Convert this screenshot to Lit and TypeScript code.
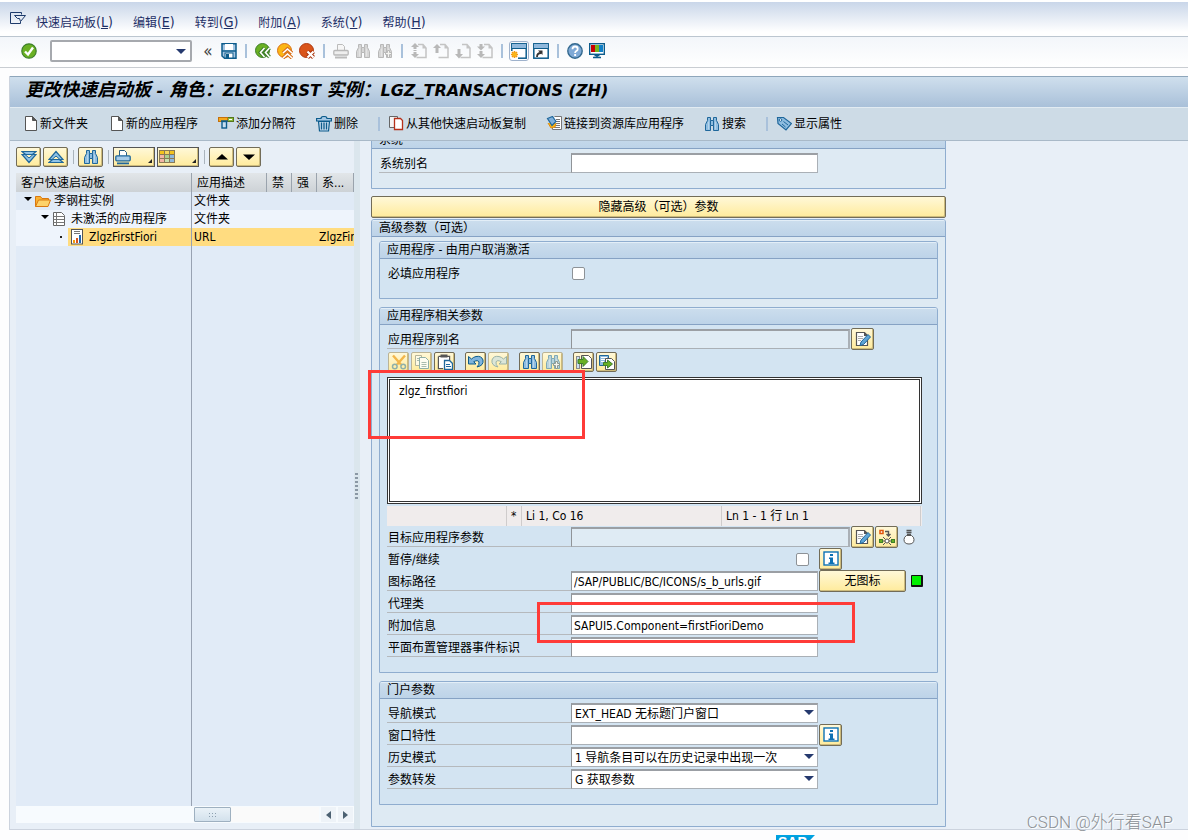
import { LitElement, html, css, svg, nothing } from "lit";
import { customElement, property } from "lit/decorators.js";
import { classMap } from "lit/directives/class-map.js";

const binoculars = (fill: string, line: string) => svg`
  <path d="M3.5 1.5h3v3h3v-3h3v3l2 4v6h-5v-5h-3v5h-5v-6l2-4z" fill=${fill} stroke=${line} />
  <path d="M4.5 5.5v8M11.5 5.5v8" stroke="#fff" stroke-opacity=".35" fill="none" />
  <path d="M6.5 4.5v5M9.5 4.5v5" stroke=${line} fill="none" />`;

const page = (arrow: unknown) => svg`
  <path d="M7 1.5h5l3 3.500v9.500H5.500" fill="none" stroke="#c4c4c4" stroke-width="1.500" />
  <path d="M11.500 1.500v4h4z" fill="#c4c4c4" />${arrow}`;

const plusBadge = (line: string) => svg`
  <path d="M10.500 7.500h2v2h2v2h-2v3h-2v-3h-2v-2h2z" fill="#f4f4f0" stroke=${line} />`;

const icons: Record<string, unknown> = {
  exit: svg`<path d="M11.500 4.500V2.500H.5v11h10v-2M4.500 5.500h11l-5 6-1-3H7.500l-3-3z" fill="none" stroke="#1d3a6b" />`,
  ok: svg`<circle cx="8" cy="8" r="7.200" fill="#6ab023" stroke="#3d7f2a" stroke-width="1.200" />
    <path d="M4 8.500l3 3 5-7" fill="none" stroke="#fff" stroke-width="2.400" />`,
  save: svg`<path d="M1 .8h14v14.400H3.500L1 13z" fill="#a5c5e2" stroke="#0d5c8c" stroke-width="1.500" />
    <rect x="4" y="1" width="8" height="6" fill="#fff" /><path d="M1 8h14" stroke="#0d5c8c" stroke-width="1.500" />
    <rect x="4" y="10" width="8" height="5" fill="#fff" stroke="#0d5c8c" /><rect x="5" y="11" width="3" height="4" fill="#0d5c8c" />`,
  back: svg`<circle cx="7.500" cy="7.500" r="7" fill="#6ab023" stroke="#3d7f2a" />
    <path d="M9.500 5L5.500 9.500l4 4.500M14.500 5l-4 4.500 4 4.500" fill="none" stroke="#3d7f2a" stroke-width="3.600" />
    <path d="M9.500 5L5.500 9.500l4 4.500M14.500 5l-4 4.500 4 4.500" fill="none" stroke="#fff" stroke-width="1.600" />`,
  up: svg`<circle cx="7.500" cy="7.500" r="7" fill="#fbb615" stroke="#d9701a" />
    <path d="M6 10l4.500-4 4.500 4M6 15l4.500-4 4.500 4" fill="none" stroke="#d9701a" stroke-width="3.600" />
    <path d="M6 10l4.500-4 4.500 4M6 15l4.500-4 4.500 4" fill="none" stroke="#fff" stroke-width="1.600" />`,
  cancel: svg`<circle cx="7.500" cy="7.500" r="7" fill="#d9541a" stroke="#b03a10" />
    <path d="M8.500 8.500l6 6M14.500 8.500l-6 6" stroke="#a8320c" stroke-width="4" />
    <path d="M8.500 8.500l6 6M14.500 8.500l-6 6" stroke="#fff" stroke-width="2.200" />`,
  printGray: svg`<path d="M4.500 7V1.500h5l2 2V7" fill="#f6f6f6" stroke="#bbb" />
    <rect x=".8" y="7.500" width="14.400" height="4.500" rx="1" fill="#eee" stroke="#b8b8b8" stroke-width="1.300" /><rect x="2" y="13.500" width="12" height="2" fill="#bbb" />`,
  findGray: binoculars("#d6d6d6", "#b8b8b8"),
  findNextGray: svg`${binoculars("#d6d6d6", "#b8b8b8")}${plusBadge("#b8b8b8")}`,
  firstPage: page(svg`<path d="M4 0l4 4H5.500v2h-3V4H0zM2.500 7h3v1h-3zM2.500 9h3v2H8l-4 4-4-4h2.500z" fill="#b8b8b8" />`),
  prevPage: page(svg`<path d="M4 1l4 4H5.500v5h-3V5H0z" fill="#b8b8b8" />`),
  nextPage: page(svg`<path d="M4 15.500l4-4.500H5.500V6h-3v5H0z" fill="#b8b8b8" />`),
  lastPage: page(svg`<path d="M4 7.500l4-4H5.500V1h-3v2.500H0zM4 15l4-4H5.500V8h-3v3H0z" fill="#b8b8b8" />`),
  newSession: svg`<rect x=".8" y=".8" width="14.400" height="14.400" fill="#fff" stroke="#0d5c8c" stroke-width="1.500" />
    <rect x="1" y="1" width="14" height="4" fill="#8fb8dc" /><path d="M1 5.500h14" stroke="#0d5c8c" />
    <rect x="0" y="8" width="7" height="8" fill="#fff" />
    <path d="M3.500 8v7M0 11.500h7M1 9l5 5M6 9l-5 5" stroke="#f39a0c" stroke-width="1.600" /><circle cx="3.500" cy="11.500" r="2" fill="#fbb615" />`,
  shortcut: svg`<rect x=".8" y=".8" width="14.400" height="14.400" fill="#fff" stroke="#0d5c8c" stroke-width="1.500" />
    <rect x="1" y="1" width="14" height="4" fill="#8fb8dc" /><path d="M1 5.500h14" stroke="#0d5c8c" />
    <path d="M4 14q0-4 4-4" fill="none" stroke="#333" stroke-width="1.800" /><path d="M5 7.500h4.500V12z" fill="#333" />`,
  help: svg`<circle cx="8" cy="8" r="7.200" fill="#7fa9d6" stroke="#33698f" stroke-width="1.400" />
    <path d="M5.500 6.200q0-2.700 2.600-2.700t2.600 2.400q0 1.300-1.400 2.100-1.200.7-1.200 2" fill="none" stroke="#fff" stroke-width="1.800" /><rect x="7.200" y="11" width="1.900" height="2" fill="#fff" />`,
  monitor: svg`<rect x=".7" y=".7" width="14.600" height="10.600" fill="#fff" stroke="#0d5c8c" stroke-width="1.400" />
    <rect x="2" y="2" width="4" height="7" fill="#c80000" /><rect x="6" y="2" width="4" height="7" fill="#76b51f" /><rect x="10" y="2" width="4" height="7" fill="#1180c8" />
    <path d="M8 11v3M4 14.500h8M5.500 12.500h5" stroke="#0d5c8c" stroke-width="1.600" />`,
  doc: svg`<path d="M3.500.5h7l4 4v10h-11z" fill="#fff" stroke="#555" /><path d="M10.500.5v4h4z" fill="#555" stroke="#555" />`,
  separator: svg`<rect x=".5" y="1.500" width="15" height="4" fill="#8ab93a" stroke="#55761d" /><rect x=".5" y="1.500" width="9" height="4" fill="#f5a81a" stroke="#c4700c" />
    <rect x="11" y="3" width="3" height="1" fill="#fff" /><path d="M3 5h7" stroke="#0d5c8c" stroke-width="1.400" /><rect x="4" y="5.500" width="4.500" height="6.500" fill="#c9dff0" stroke="#0d5c8c" stroke-width="1.400" />`,
  trash: svg`<path d="M2.500 5.500l1 9.500h9l1-9.500z" fill="#c5dbee" stroke="#0d5c8c" stroke-width="1.200" /><path d="M.6 2.500h4.400q0-2 3-2t3 2h4.400v2.500H.6z" fill="#a5c9e6" stroke="#0d5c8c" stroke-width="1.200" />
    <path d="M5.500 6.500v7M8 6.500v7M10.500 6.500v7" stroke="#0d5c8c" stroke-width="1.300" />`,
  copyFrom: svg`<path d="M6 11.500H1.500v-11h8V2" fill="#f4f4f4" stroke="#666" /><path d="M6.500 2.500h6l2 2v9h-8z" fill="#fff" stroke="#b5301a" stroke-width="1.300" />`,
  link: svg`<path d="M8.500.5h7v13h-9v-4" fill="#fff" stroke="#777" /><path d="M10 3.500h4M10 5.500h4M10 7.500h4M9 9.500h5M8 11.500h6" stroke="#777" />
    <path d="M2 7l3 5 4-1 1-4" fill="#fbb615" stroke="#e08d10" /><path d="M1.500 2.500l5-2 3.500 5-4 4z" fill="#7fb0db" stroke="#1f679b" stroke-width="1.200" />`,
  find: binoculars("#8fbde0", "#1f679b"),
  findLight: svg`${binoculars("#b9d3dc", "#7fa9b5")}${plusBadge("#8f9a90")}`,
  tag: svg`<path d="M1.500 1.500l6 0 8 6-5.500 6.500L2 7.500z" fill="#8fbde0" stroke="#1f679b" stroke-width="1.200" /><circle cx="4.500" cy="4" r="1.300" fill="#fff" stroke="#1f679b" />
    <path d="M7.500 5.500l4.500 3.500M6 8l3.500 3" stroke="#1f679b" />`,
  expandAll: svg`<path d="M1 2.500h14l-3.500 3H15L8 13.500 1 5.500h3.500z" fill="#8fc3e8" stroke="#1f679b" stroke-width="1.200" /><path d="M4 5.500h8L8 9z" fill="#fff3c0" stroke="#1f679b" />`,
  collapseAll: svg`<path d="M1 13.500h14l-3.500-3H15L8 2.500 1 10.500h3.500z" fill="#8fc3e8" stroke="#1f679b" stroke-width="1.200" /><path d="M4 10.500h8L8 7z" fill="#fff3c0" stroke="#1f679b" />`,
  print: svg`<path d="M4.500 7V1.500h5l2 2V7" fill="#fff" stroke="#2a5d80" /><rect x=".8" y="6.800" width="14.400" height="5" rx="1" fill="#a5cbe9" stroke="#1f679b" stroke-width="1.300" />
    <rect x="2" y="13.500" width="12" height="1.800" fill="#1f679b" />`,
  grid: svg`<rect x="0" y="1" width="16" height="13" fill="#8a7a55" />
    <path d="M1 2h4v3H1z" fill="#f3c21c" /><path d="M6 2h4v3H6z" fill="#f7d75c" /><path d="M11 2h4v3h-4z" fill="#f3c21c" />
    <path d="M1 6h4v3H1z" fill="#f3b5a5" /><path d="M6 6h4v3H6z" fill="#a9d08e" /><path d="M11 6h4v3h-4z" fill="#8fb8dc" />
    <path d="M1 10h4v3H1z" fill="#f3b5a5" /><path d="M6 10h4v3H6z" fill="#c7e0b0" /><path d="M11 10h4v3h-4z" fill="#8fb8dc" />`,
  triUp: svg`<path d="M2 10.500L8 5l6 5.500z" fill="#000" />`,
  triDown: svg`<path d="M2 5.500L8 11l6-5.500z" fill="#000" />`,
  folder: svg`<path d="M.5 13.500v-10h5l1.500 2h6.500v2" fill="#f9b233" stroke="#d9780f" /><path d="M.5 13.500l3-6.500h12l-2.500 6.500z" fill="#fdd26a" stroke="#d9780f" />`,
  list: svg`<path d="M1.500 1.500h8l3 3v10h-11z" fill="#fff" stroke="#666" /><path d="M4.500 1.500v13M1.500 5.500h11M1.500 8.500h11M1.500 11.500h11" stroke="#777" />`,
  chart: svg`<rect x="1.500" y=".5" width="11" height="14.500" fill="#fff" stroke="#555" /><path d="M4 2.500h6M4 4.500h6" stroke="#777" />
    <path d="M3 11h2v3H3z" fill="#f39a0c" /><path d="M6 9h2v5H6z" fill="#d9541a" /><path d="M9 6h2v8H9z" fill="#1f67b0" />`,
  cut: svg`<path d="M2 1.500l8 9M14 1.500l-8 9" stroke="#f2b64a" stroke-width="2.400" /><circle cx="3.800" cy="12.500" r="2.300" fill="none" stroke="#8fb0a8" stroke-width="1.500" /><circle cx="12.200" cy="12.500" r="2.300" fill="none" stroke="#8fb0a8" stroke-width="1.500" />`,
  copy: svg`<path d="M6 11.500H1.500v-10h6V3" fill="#fffbe6" stroke="#b5b59a" /><path d="M5.500 3.500h6l3 3v8h-9z" fill="#fdfdf2" stroke="#8fb0a8" /><path d="M7.500 8.500h5M7.500 10.500h5M7.500 12.500h5M3 4.500h2M3 6.500h2" stroke="#a9bcae" />`,
  paste: svg`<path d="M1.500 2.500h11v4M6 14.500H1.500v-12" fill="none" stroke="#555" stroke-width="1.400" /><rect x="2" y="3" width="10" height="11" fill="#fff" /><rect x="3.500" y=".5" width="7" height="3" fill="#555" />
    <path d="M7.500 6.500h5l3 3v6h-8z" fill="#fff" stroke="#1f679b" stroke-width="1.300" /><path d="M9 10.500h4M9 12.500h5" stroke="#1f679b" />`,
  undo: svg`<path d="M.5 2.500v7.500H8L5.700 7.700Q10 5.500 11 8q.5 2.500-2 5 7-1.500 6-7Q13.500 1.500 8 2.500 5.500 3 3.500 5z" fill="#7fb4dc" stroke="#0d5c8c" />`,
  redo: svg`<path d="M15.500 2.500v7.500H8l2.300-2.300Q6 5.500 5 8q-.5 2.500 2 5-7-1.500-6-7Q2.500 1.500 8 2.500 10.500 3 12.500 5z" fill="#dbe6d8" stroke="#9bb3a8" />`,
  load: svg`<path d="M5.500 1.500h7l3 3v10h-10z" fill="#fff" stroke="#555" /><rect x=".5" y="2.500" width="3" height="12" fill="#c9dff0" stroke="#888" /><path d="M2 5.500h5v-3l5 5-5 5v-3H2z" fill="#6ab023" stroke="#3d7f2a" />`,
  unload: svg`<path d="M.5 1.500h9v10h-9z" fill="#8fbde0" stroke="#1f679b" /><path d="M2 3.500h6M2 5.500h6M2 7.500h3" stroke="#fff" /><path d="M6.500 4.500h6l3 3v8h-9z" fill="#fff" stroke="#555" /><path d="M4.500 8.500h4v-2.500l5 4-5 4v-2.500h-4z" fill="#6ab023" stroke="#3d7f2a" />`,
  edit: svg`<path d="M1.500 1.500h8l3 3v10h-11z" fill="#fff" stroke="#555" stroke-width="1.200" /><path d="M9 1v4h4z" fill="#555" /><path d="M3 5.500h5M3 7.500h5M3 9.500h3" stroke="#aaa" />
    <path d="M5 14.500l1-3.500 7-7.500 2.500 2.500-7 7.500z" fill="#5fa5d6" stroke="#1f679b" />`,
  flow: svg`<path d="M1 1.500h3v3H1z" fill="#fff" stroke="#e0560c" stroke-width="1.500" /><path d="M6 2.500h3.500v4M7.500 5l2 2 2-2" fill="none" stroke="#555" stroke-width="1.400" />
    <rect x=".5" y="10.500" width="3" height="3" fill="#6ab023" stroke="#3d7f2a" /><rect x="12.500" y="10.500" width="3" height="3" fill="#6ab023" stroke="#3d7f2a" />
    <path d="M4 12h2M10 12h2M4 8l2.500 2.500M12 8l-2.500 2.500M4 16l2.500-2.500M12 16l-2.500-2.500" stroke="#555" /><circle cx="8" cy="12" r="2" fill="#fff" stroke="#555" />`,
  bulb: svg`<path d="M4.500 1.500h5M4.500 3.500h5M5 5.500h4" stroke="#555" stroke-width="1.300" /><path d="M4.500 6.500h5q2.500 1.500 2.500 4 0 4.500-5 4.500t-5-4.500q0-2.500 2.500-4z" fill="#fff" stroke="#555" />`,
  info: svg`<rect x="1" y="1" width="14" height="13" fill="#fff" stroke="#0d72b5" stroke-width="1.400" /><path d="M7 3h3v2H7zM6 6.500h4v5h1.500V13h-6v-1.500H7V8H6z" fill="#0d72b5" />`,
};

@customElement("gui-icon")
export class GuiIcon extends LitElement {
  @property() name = "";

  static styles = css`
    :host { display: block; flex: none; width: 16px; height: 16px; }
    svg { display: block; width: 16px; height: 16px; }
  `;

  render() {
    return html`<svg viewBox="0 0 16 16" aria-hidden="true">${icons[this.name] ?? nothing}</svg>`;
  }
}

const icon = (name: string) => html`<gui-icon name=${name}></gui-icon>`;

@customElement("app-root")
export class AppRoot extends LitElement {
  static styles = css`
    :host {
      display: flex; flex-direction: column; min-height: 100vh; overflow: hidden; position: relative;
      background: #fdfdfe; color: #000;
      font: 12px/16px "DejaVu Sans Condensed", "Noto Sans CJK SC", sans-serif;
    }
    *, *::before, *::after { box-sizing: border-box; }
    button, input, select, textarea { font: inherit; color: inherit; margin: 0; border-radius: 0; }
    button { padding: 0; border: 0; background: none; }

    .menu { display: flex; align-items: center; gap: 20px; height: 37px; padding: 8px 10px 0;
      background: linear-gradient(#fff 2px, #c9d6e9 2px, #fff 32px); border-bottom: 1px solid #bcc6d0; color: #1e2f66; }
    .menu gui-icon { margin: 0 -10px 8px 0; }
    .menu button { white-space: nowrap; }
    .menu .key { font-size: 14px; }

    .tools { display: flex; align-items: center; gap: 6px; height: 31px; padding-left: 21px; padding-bottom: 2px;
      background: linear-gradient(#f3f6fa, #fff); border-bottom: 1px solid #c9cdd2; }
    .tools button { display: block; }
    .tools .active { outline: 1px solid #9fb2cc; outline-offset: 1px; border-radius: 1px; }
    .command { position: relative; width: 142px; margin: 0 4px 0 7px; }
    .command input { display: block; width: 100%; height: 22px; border: 2px solid #a6a9ae; border-radius: 2px; background: #fff; }
    .arrow::after { content: ""; position: absolute; right: 4px; top: 7px; border: 5px solid transparent; border-top-color: #25396e; border-bottom: 0; pointer-events: none; }
    .command.arrow::after { top: 9px; right: 6px; }
    .tools .chevron { width: 12px; height: 16px; color: #444; font-size: 17px; line-height: 12px; margin-right: 1px; }
    .sep { width: 6px; height: 14px; flex: none; background: linear-gradient(#a9c1db, #a9c1db) center / 2px 100% no-repeat; }

    .window { flex: 1; display: flex; flex-direction: column; margin: 8px 0 0 9px; border: 1px solid #ccd3de; border-width: 0 0 1px 1px; background: #e8eff7; }
    .title { margin: 0; height: 32px; padding-left: 15px; border-top: 1px solid #8ea6bb; border-bottom: 1px solid #e2ebf2; background: linear-gradient(#cfdfed, #a9c0d9);
      font: italic bold 16px/26px "DejaVu Sans", "Noto Sans CJK SC", sans-serif; white-space: nowrap; }
    .title .cjk { font-size: 18px; }
    .functions { display: flex; align-items: center; gap: 20px; height: 33px; padding-left: 12px; background: #cddbe6; border-bottom: 1px solid #a9b9c8; }
    .functions button { display: flex; align-items: center; gap: 2px; white-space: nowrap; }
    .functions .sep { width: 2px; margin-right: -12px; }

    .panes { flex: 1; display: flex; min-height: 0; }
    .tree { width: 344px; display: flex; flex-direction: column; padding: 6px 0 6px 6px; }
    .bar { display: flex; gap: 2px; align-items: center; height: 20px; margin-bottom: 6px; }
    .bar .sep { background-image: linear-gradient(#aab4bd, #aab4bd); background-size: 1px 100%; }
    .btn { display: flex; align-items: center; justify-content: center; flex: none; border: 1px solid #726c58;
      border-radius: 2px; background: linear-gradient(#fff8d8, #ffeb9c); box-shadow: inset -1px -1px 0 #cdbb7c; }
    .bar .btn { width: 25px; height: 20px; }
    .bar .wide { width: 42px; justify-content: flex-start; padding-left: 1px; position: relative; border-radius: 0; border-color: #555; }
    .bar .wide::after { content: ""; position: absolute; right: 2px; bottom: 3px; border: 2px solid #222; border-top-color: transparent; border-left-color: transparent; }

    table { width: 100%; table-layout: fixed; border-collapse: separate; border-spacing: 0; }
    .c1 { width: 176px; } .c2 { width: 75px; } .c3 { width: 25px; }
    th { height: 19px; padding: 2px 0 0 5px; text-align: left; font-weight: normal; line-height: 17px; background: linear-gradient(#e2e6e9, #cdd2d6); border-right: 1px solid #9aa3ad; white-space: nowrap; overflow: hidden; }
    td { height: 18px; padding: 0 0 0 2px; line-height: 18px; white-space: nowrap; overflow: hidden; background: #e0eaf6; }
    td:first-child { padding: 0; border-right: 1px solid #98a2b2; }
    .even td { background: #eef4fc; }
    .selected td { background: #ffdc80; }
    .selected td:first-child { background: #eef4fc; }
    .node { display: flex; align-items: center; gap: 3px; height: 18px; }
    .lvl1 { padding-left: 8px; } .lvl2 { padding-left: 25px; } .lvl3 { padding-left: 41px; }
    .twisty { width: 8px; height: 8px; flex: none; display: flex; align-items: flex-start; justify-content: center; }
    .twisty::before { content: ""; border: 4px solid transparent; border-top: 4px solid #000; border-bottom: 0; }
    .leaf { width: 8px; flex: none; display: flex; align-items: center; justify-content: center; }
    .leaf::before { content: ""; width: 2px; height: 2px; background: #222; }
    .pick { flex: 1; height: 18px; display: flex; align-items: center; gap: 3px; padding-left: 2px; background: #ffdc80; }
    .empty { flex: 1; background: #e1ebf7; }
    .empty::before { content: ""; display: block; width: 176px; height: 100%; border-right: 1px solid #98a2b2; }
    .scroll { display: flex; align-items: center; gap: 2px; height: 17px; background: #f7fbfe; padding-right: 1px; }
    .track { flex: 1; height: 15px; margin-left: 178px; background: #fafafa; }
    .thumb { width: 37px; height: 15px; border: 1px solid #9eb0c0; border-radius: 1px; background: linear-gradient(#eaf2f8, #d3e1ec); display: flex; align-items: center; justify-content: center; }
    .thumb::before { content: ""; width: 9px; height: 5px; background: radial-gradient(circle, #8da0b0 1px, transparent 1px) 0 0 / 3px 3px; }
    .scroll .step { width: 15px; height: 15px; display: flex; align-items: center; justify-content: center; background: #eef3f8; }
    .step::before { content: ""; border: 4px solid transparent; border-right: 5px solid #4c6172; border-left: 0; }
    .step.next::before { border-right: 0; border-left: 5px solid #4c6172; }
    .splitter { width: 6px; display: flex; align-items: center; padding-top: 4px; background: #dbe6ed; }
    .splitter::before { content: ""; width: 4px; height: 28px; background: linear-gradient(#8b98a5 2px, transparent 2px) 1px 0 / 3px 4px repeat-y; }

    .form { flex: 1; min-width: 0; padding: 0 12px 2px 11px; overflow: hidden; }
    .sheet { max-width: 575px; margin-top: -10px; display: flex; flex-direction: column; }
    .group { position: relative; margin: 0; border: 1px solid #8fadcf; border-radius: 3px 3px 0 0; background: #deeaf3; }
    .group h2 { margin: 0; height: 17px; padding-left: 7px; border-bottom: 1px solid #86a2c4; border-radius: 2px 2px 0 0; background: linear-gradient(#e3eef7 1px, #cbdded 1px, #bdd3e8); font-size: 12px; font-weight: normal; line-height: 17px; }
    .first { margin-bottom: 7px; }
    .first label { width: 192px; }
    .outer > .stack { display: flex; flex-direction: column; gap: 8px; padding: 4px 7px 21px; }
    .inner { background: #d3e4f2; }
    .body { padding: 4px 7px 13px; }
    .toggle { width: 100%; height: 22px; margin-bottom: 1px; }
    .row { display: flex; align-items: center; gap: 1px; height: 20px; margin-bottom: 2px; }
    .row label { flex: none; width: 184px; height: 20px; padding-left: 1px; margin-right: -1px; border-bottom: 1px solid #b5b9bd; line-height: 22px; white-space: nowrap; }
    .first .row label { width: 192px; }
    .row .plain { border-bottom: 0; }
    .field { width: 247px; height: 20px; flex: none; position: relative; display: flex; align-items: center; }
    .field.long { width: 279px; }
    .field.start { padding-left: 1px; }
    .field.end { justify-content: flex-end; padding-right: 9px; }
    .field input[type="text"], .field select { width: 100%; height: 20px; padding: 0 2px; border: 1px solid #aab0b6; border-top: 2px solid #9b9fa4; border-left-color: #909498; background: #fff; outline: 0; appearance: none; line-height: 16px; }
    .field select { padding-left: 3px; }
    .field input[readonly] { background: #dfebf4; border-right-width: 2px; }
    .check { appearance: none; width: 13px; height: 13px; border: 1px solid #8d9297; border-radius: 2px; background: #fff; }
    .row .btn { width: 23px; height: 22px; }
    .row .text { width: 87px; }
    .led { width: 12px; height: 12px; margin-left: 4px; border: 2px solid #111; border-width: 1px 2px 2px 1px; border-radius: 1px; background: #00f000; }
    .row > gui-icon { margin-left: 3px; }
    .edit-bar { display: flex; gap: 2px; margin: -1px 0 5px 1px; padding-top: 2px; }
    .edit-bar .btn { width: 21px; height: 20px; }
    .edit-bar .dim { border-color: #bbb496; }
    .edit-bar .lead { margin-left: 8px; }
    .editor { width: 535px; max-width: 100%; }
    .editor textarea { display: block; width: 100%; height: 127px; padding: 3px 9px; border: 3px double #333; background: #fff; resize: none; outline: 0; line-height: 16px; }
    .status { display: flex; height: 20px; margin: 2px 0 1px; background: #f0ecec; line-height: 21px; }
    .status span { border-right: 1px solid #cfcccc; padding-left: 4px; white-space: nowrap; }
    .s1 { width: 120px; } .s2 { width: 15px; } .s3 { width: 200px; } .s4 { flex: 1; margin-right: 1px; }
    .mark { position: absolute; border: 3px solid #ff3b38; pointer-events: none; }
    .mark-text { left: -12px; top: 62px; width: 217px; height: 69px; }
    .mark-info { left: 157px; top: 294px; width: 318px; height: 41px; }

    .foot { display: flex; height: 10px; padding-top: 5px; overflow: hidden; }
    .logo { width: 39px; height: 20px; padding-left: 2px; margin: 0 373px 0 auto; background: linear-gradient(#00a5e3, #0070b8); clip-path: polygon(0 0, 100% 0, 50% 100%, 0 100%); color: #fff; font: bold 14px/14px "Liberation Sans", sans-serif; }
    .credit { position: absolute; right: 15px; bottom: 6px; color: #8b8f94; font: 300 17px/24px Roboto, "Noto Sans CJK SC", sans-serif; text-shadow: 1px 1px 0 #fff; }
  `;

  private menu = [["快速启动板", "L"], ["编辑", "E"], ["转到", "G"], ["附加", "A"], ["系统", "Y"], ["帮助", "H"]];

  private toolGroups = [
    ["back", "up", "cancel"],
    ["printGray", "findGray", "findNextGray"],
    ["firstPage", "prevPage", "nextPage", "lastPage"],
    ["newSession", "shortcut"],
    ["help", "monitor"],
  ];

  private functions: (string[] | null)[] = [
    ["doc", "新文件夹"], ["doc", "新的应用程序"], ["separator", "添加分隔符"], ["trash", "删除"], null,
    ["copyFrom", "从其他快速启动板复制"], ["link", "链接到资源库应用程序"], ["find", "搜索"], null, ["tag", "显示属性"],
  ];

  private editTools = ["cut", "copy", "paste", "undo", "redo", "find", "findLight", "load", "unload"];

  private btn(name: string, label: string, extra = "") {
    return html`<button class="btn ${extra}" aria-label=${label}>${icon(name)}</button>`;
  }

  private text(id: string, label: string, value = "", opts: { long?: boolean; after?: unknown } = {}) {
    return html`<div class="row">
      <label for=${id}>${label}</label>
      <div class=${classMap({ field: true, long: !!opts.long })}>
        <input type="text" id=${id} .value=${value} ?readonly=${!!opts.long} />
      </div>
      ${opts.after ?? nothing}
    </div>`;
  }

  private choice(id: string, label: string, value: string) {
    return html`<div class="row">
      <label for=${id}>${label}</label>
      <div class="field arrow"><select id=${id}><option>${value}</option></select></div>
    </div>`;
  }

  private renderTree() {
    return html`<section class="tree">
      <div class="bar">
        ${this.btn("expandAll", "全部展开")}${this.btn("collapseAll", "全部折叠")}
        <span class="sep"></span>${this.btn("find", "查找")}<span class="sep"></span>
        ${this.btn("print", "打印", "wide")}${this.btn("grid", "布局", "wide")}
        <span class="sep"></span>${this.btn("triUp", "上移")}${this.btn("triDown", "下移")}
      </div>
      <table>
        <colgroup><col class="c1" /><col class="c2" /><col class="c3" /><col class="c3" /><col /></colgroup>
        <thead><tr><th>客户快速启动板</th><th>应用描述</th><th>禁</th><th>强</th><th>系...</th></tr></thead>
        <tbody>
          <tr><td><div class="node lvl1"><i class="twisty"></i>${icon("folder")}<span>李钢柱实例</span></div></td><td>文件夹</td><td></td><td></td><td></td></tr>
          <tr class="even"><td><div class="node lvl2"><i class="twisty"></i>${icon("list")}<span>未激活的应用程序</span></div></td><td>文件夹</td><td></td><td></td><td></td></tr>
          <tr class="selected"><td><div class="node lvl3"><i class="leaf"></i><div class="pick">${icon("chart")}<span>ZlgzFirstFiori</span></div></div></td><td>URL</td><td></td><td></td><td>ZlgzFirstFiori</td></tr>
        </tbody>
      </table>
      <div class="empty"></div>
      <div class="scroll">
        <div class="track"><div class="thumb"></div></div>
        <button class="step" aria-label="向左"></button><button class="step next" aria-label="向右"></button>
      </div>
    </section>`;
  }

  private renderForm() {
    return html`<section class="form"><div class="sheet">
      <div class="group first"><h2>系统</h2><div class="body">${this.text("alias", "系统别名")}</div></div>
      <button class="btn toggle">隐藏高级（可选）参数</button>
      <div class="group outer"><h2>高级参数（可选）</h2><div class="stack">
        <div class="group inner"><h2>应用程序 - 由用户取消激活</h2><div class="body">
          <div class="row"><label class="plain" for="required">必填应用程序</label><div class="field start"><input class="check" type="checkbox" id="required" /></div></div>
        </div></div>
        <div class="group inner"><h2>应用程序相关参数</h2><div class="body">
          ${this.text("appalias", "应用程序别名", "", { long: true, after: this.btn("edit", "编辑") })}
          <div class="edit-bar">
            ${this.editTools.map((name, i) => this.btn(name, name,
              `${[3, 5, 7].includes(i) ? "lead" : ""} ${[0, 1, 4, 6].includes(i) ? "dim" : ""}`))}
          </div>
          <div class="editor">
            <textarea aria-label="应用程序参数" .value=${"zlgz_firstfiori"}></textarea>
            <div class="status"><span class="s1"></span><span class="s2">*</span><span class="s3">Li 1, Co 16</span><span class="s4">Ln 1 - 1 行 Ln 1</span></div>
          </div>
          ${this.text("target", "目标应用程序参数", "", { long: true, after: html`${this.btn("edit", "编辑")}${this.btn("flow", "映射")}${icon("bulb")}` })}
          <div class="row"><label class="plain" for="suspend">暂停/继续</label><div class="field end"><input class="check" type="checkbox" id="suspend" /></div>${this.btn("info", "信息")}</div>
          ${this.text("iconpath", "图标路径", "/SAP/PUBLIC/BC/ICONS/s_b_urls.gif", { after: html`<button class="btn text">无图标</button><span class="led"></span>` })}
          ${this.text("proxy", "代理类")}
          ${this.text("extra", "附加信息", "SAPUI5.Component=firstFioriDemo")}
          ${this.text("event", "平面布置管理器事件标识")}
        </div><div class="mark mark-text"></div><div class="mark mark-info"></div></div>
        <div class="group inner"><h2>门户参数</h2><div class="body">
          ${this.choice("nav", "导航模式", "EXT_HEAD 无标题门户窗口")}
          ${this.text("winprops", "窗口特性", "", { after: this.btn("info", "信息") })}
          ${this.choice("history", "历史模式", "1 导航条目可以在历史记录中出现一次")}
          ${this.choice("forward", "参数转发", "G 获取参数")}
        </div></div>
      </div></div>
    </div></section>`;
  }

  render() {
    return html`
      <nav class="menu">${icon("exit")}${this.menu.map(([t, k]) => html`<button>${t}<span class="key">(<u>${k}</u>)</span></button>`)}</nav>
      <div class="tools">
        <button aria-label="回车">${icon("ok")}</button>
        <div class="command arrow"><input type="text" aria-label="命令" /></div>
        <button class="chevron" aria-label="收起">«</button>
        <button aria-label="保存">${icon("save")}</button>
        ${this.toolGroups.map((g) => html`<span class="sep"></span>${g.map((n) => html`<button class=${classMap({ active: n === "newSession" })} aria-label=${n}>${icon(n)}</button>`)}`)}
      </div>
      <main class="window">
        <h1 class="title"><span class="cjk">更改快速启动板</span> - <span class="cjk">角色：</span>ZLGZFIRST <span class="cjk">实例：</span>LGZ_TRANSACTIONS (ZH)</h1>
        <div class="functions">${this.functions.map((f) => f ? html`<button>${icon(f[0])}${f[1]}</button>` : html`<span class="sep"></span>`)}</div>
        <div class="panes">${this.renderTree()}<div class="splitter"></div>${this.renderForm()}</div>
      </main>
      <footer class="foot"><div class="logo">SAP</div></footer>
      <div class="credit">CSDN @外行看SAP</div>`;
  }
}
